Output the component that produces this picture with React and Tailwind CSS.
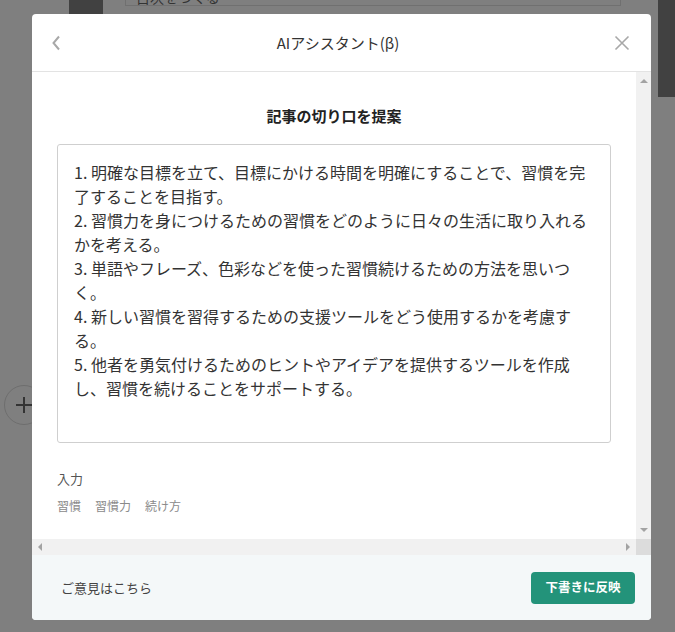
import React from 'react';

const jp = "font-['Noto_Sans_CJK_JP','Noto_Sans',sans-serif]";

// each suggestion is broken where the panel wraps it
const suggestions = [
  ['1. 明確な目標を立て、目標にかける時間を明確にすることで、習慣を完', '了することを目指す。'],
  ['2. 習慣力を身につけるための習慣をどのように日々の生活に取り入れる', 'かを考える。'],
  ['3. 単語やフレーズ、色彩などを使った習慣続けるための方法を思いつ', 'く。'],
  ['4. 新しい習慣を習得するための支援ツールをどう使用するかを考慮す', 'る。'],
  ['5. 他者を勇気付けるためのヒントやアイデアを提供するツールを作成', 'し、習慣を続けることをサポートする。'],
];

const keywords = ['習慣', '習慣力', '続け方'];

const Arrow = ({ dir }) => {
  const shapes = {
    up: 'border-x-[4px] border-b-[4px] border-x-transparent border-b-[#a3a3a3]',
    down: 'border-x-[4px] border-t-[4px] border-x-transparent border-t-[#a3a3a3]',
    left: 'border-y-[4px] border-r-[4px] border-y-transparent border-r-[#a3a3a3]',
    right: 'border-y-[4px] border-l-[4px] border-y-transparent border-l-[#a3a3a3]',
  };
  return <div className={`h-0 w-0 ${shapes[dir]}`} />;
};

const App = () => {
  return (
    <div className={`relative h-[632px] w-[675px] overflow-hidden bg-[#7f7f7f] ${jp}`}>
      {/* editor page dimmed behind the overlay */}
      <div className="flex h-full">
        <div className="flex w-[69px] flex-col">
          <div className="ml-[4px] mt-[385px] flex h-[40px] w-[40px] items-center justify-center rounded-full border border-[#6e6e6e]">
            <svg width="18" height="18" viewBox="0 0 18 18">
              <path d="M9 1v16M1 9h16" stroke="#333" strokeWidth="2" />
            </svg>
          </div>
        </div>
        <div className="h-[15px] w-[34px] bg-[#414141]" />
        <div className="w-[22px]" />
        <div className="h-[6px] w-[496px] overflow-hidden border-x border-b border-[#707070]">
          <div className="-mt-[11px] pl-[10px] text-[14px] leading-[16px] text-[#333]">目次をつくる</div>
        </div>
        <div className="ml-auto h-[97px] w-[17px] bg-[#414141]" />
      </div>

      {/* AI assistant modal */}
      <div className="absolute left-[32px] top-[14px] flex h-[606px] w-[619px] flex-col overflow-hidden rounded-[4px] bg-white">
        <header className="flex h-[58px] shrink-0 items-center justify-between border-b border-[#e3e3e3] pl-[18px] pr-[20px]">
          <svg width="12" height="16" viewBox="0 0 12 16">
            <path d="M9 1.5 3.5 8 9 14.5" fill="none" stroke="#a8a8a8" strokeWidth="2" />
          </svg>
          <div className="text-[15px] leading-[20px] text-[#333]">AIアシスタント(β)</div>
          <svg width="16" height="16" viewBox="0 0 16 16" className="mr-[1px]">
            <path d="M1.5 1.5l13 13M14.5 1.5l-13 13" stroke="#a8a8a8" strokeWidth="1.6" />
          </svg>
        </header>

        <div className="flex min-h-0 flex-1">
          <div className="flex-1 px-[25px] pt-[34px]">
            <h2 className="text-center text-[15px] font-bold leading-[20px] text-[#222]">記事の切り口を提案</h2>
            <div className="mt-[18px] h-[299px] rounded-[3px] border border-[#cfcfcf] py-[15px] pl-[16px] pr-[10px] text-[16px] leading-[24px] text-[#333]">
              {suggestions.map((lines) => (
                <div key={lines[0]}>
                  {lines.map((line) => (
                    <div key={line} className="whitespace-nowrap">{line}</div>
                  ))}
                </div>
              ))}
            </div>
            <div className="mt-[27px] text-[13px] leading-[18px] text-[#555]">入力</div>
            <div className="mt-[10px] flex gap-[14px] text-[12px] leading-[16px] text-[#8a8a8a]">
              {keywords.map((word) => (
                <span key={word}>{word}</span>
              ))}
            </div>
          </div>
          <div className="flex w-[15px] flex-col items-center justify-between bg-[#f1f1f1] py-[7px]">
            <Arrow dir="up" />
            <Arrow dir="down" />
          </div>
        </div>
        <div className="flex h-[16px] shrink-0">
          <div className="flex flex-1 items-center justify-between bg-[#f1f1f1] px-[6px]">
            <Arrow dir="left" />
            <Arrow dir="right" />
          </div>
          <div className="w-[15px] bg-[#dcdcdc]" />
        </div>

        <footer className="flex h-[65px] shrink-0 items-center justify-between bg-[#f4f8f9] pl-[29px] pr-[16px]">
          <span className="text-[13px] text-[#444]">ご意見はこちら</span>
          <button className="h-[32px] w-[104px] rounded-[4px] bg-[#23937a] text-[12.5px] font-bold text-white">
            下書きに反映
          </button>
        </footer>
      </div>
    </div>
  );
};

export default App;
